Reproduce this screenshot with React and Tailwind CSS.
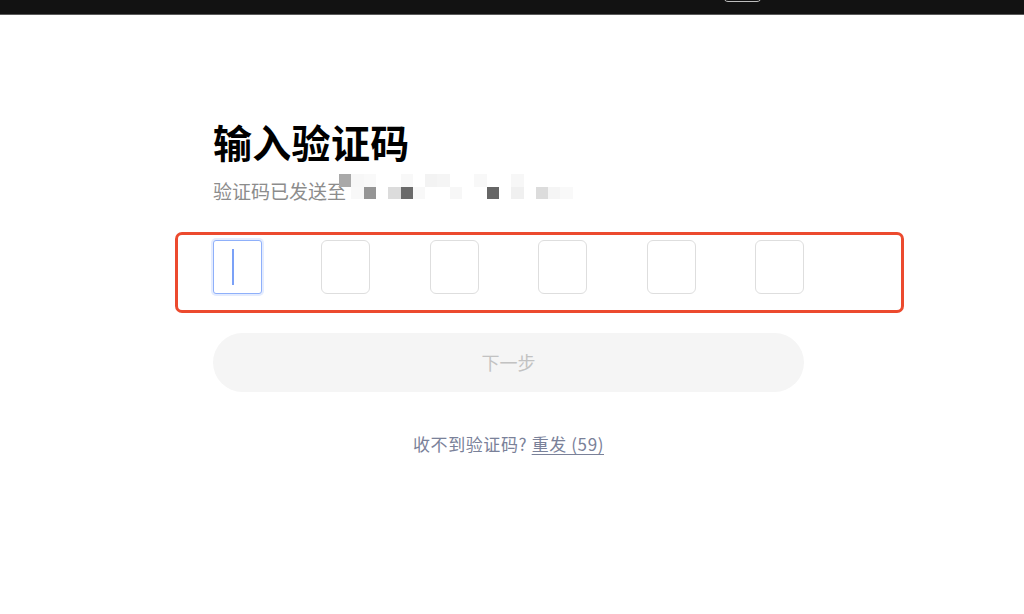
import React from "react";

const mosaic = [
  // [column, row, colour]
  [0, 0, "#a9a9a9"],
  [1, 0, "#f7f7f7"],
  [2, 0, "#f9f9f9"],
  [5, 0, "#f8f8f8"],
  [7, 0, "#f3f3f3"],
  [8, 0, "#f5f5f5"],
  [11, 0, "#f8f8f8"],
  [14, 0, "#f7f7f7"],
  [1, 1, "#f8f8f8"],
  [2, 1, "#959595"],
  [4, 1, "#dcdcdc"],
  [5, 1, "#6a6a6a"],
  [6, 1, "#f8f8f8"],
  [9, 1, "#f7f7f7"],
  [12, 1, "#666666"],
  [14, 1, "#f0f0f0"],
  [16, 1, "#dcdcdc"],
  [17, 1, "#f5f5f5"],
  [18, 1, "#f9f9f9"],
];

function Mosaic() {
  return (
    <span className="relative block h-[25px] w-[235px]">
      {mosaic.map(([c, r, color]) => (
        <span
          key={`${c}-${r}`}
          className="absolute h-[12.5px] w-[12.3px]"
          style={{ left: c * 12.3, top: r * 12.5, background: color }}
        />
      ))}
    </span>
  );
}

function CodeBox({ active }) {
  return (
    <div
      className={`flex h-[54px] w-[49px] items-center justify-center border bg-white ${
        active
          ? "rounded-[3px] border-[#8fb0fa] shadow-[0_0_0_2px_rgba(147,180,251,0.25)]"
          : "rounded-[6px] border-[#dedede]"
      }`}
    >
      {active ? <span className="h-[36px] w-[2px] -translate-x-[5px] bg-[#7ba1f7]" /> : null}
    </div>
  );
}

export default function App() {
  return (
    <div
      className="min-h-[614px] w-full bg-white"
      style={{ fontFamily: '"Noto Sans CJK SC", "Noto Sans", sans-serif' }}
    >
      <div className="flex h-[15px] border-b border-[#5a5a5a] bg-[#121212]">
        <div className="ml-[723px] -mt-[14px] h-[16px] w-[39px] rounded-[5px] border border-[#bdbdbd]" />
      </div>

      <div className="pl-[213px] pt-[99px]">
        <div className="w-[591px]">
          <h1 className="text-[39px] font-bold leading-[54px] tracking-[0.3px] text-black">输入验证码</h1>
          <div className="mt-[10px] flex items-start text-[19px] leading-[26px] text-[#8c8c8c]">
            <span>验证码已发送至</span>
            <span className="-ml-[7px] -mt-[4px]">
              <Mosaic />
            </span>
          </div>

          <div className="-ml-[38px] mt-[28px] w-[729px] rounded-[7px] border-[3px] border-[#ec4a2e] pb-[16px] pl-[35px] pt-[5px]">
            <div className="flex gap-[59.4px]">
              <CodeBox active />
              <CodeBox />
              <CodeBox />
              <CodeBox />
              <CodeBox />
              <CodeBox />
            </div>
          </div>

          <button
            type="button"
            className="mt-[20px] flex h-[59px] w-full items-center justify-center rounded-full bg-[#f5f5f5] text-[18px] text-[#c2c2c2]"
          >
            下一步
          </button>

          <p className="mt-[39px] text-center text-[17px] tracking-[0.6px] text-[#7a8199]">
            收不到验证码? <span className="underline underline-offset-[3px]">重发 (59)</span>
          </p>
        </div>
      </div>
    </div>
  );
}
